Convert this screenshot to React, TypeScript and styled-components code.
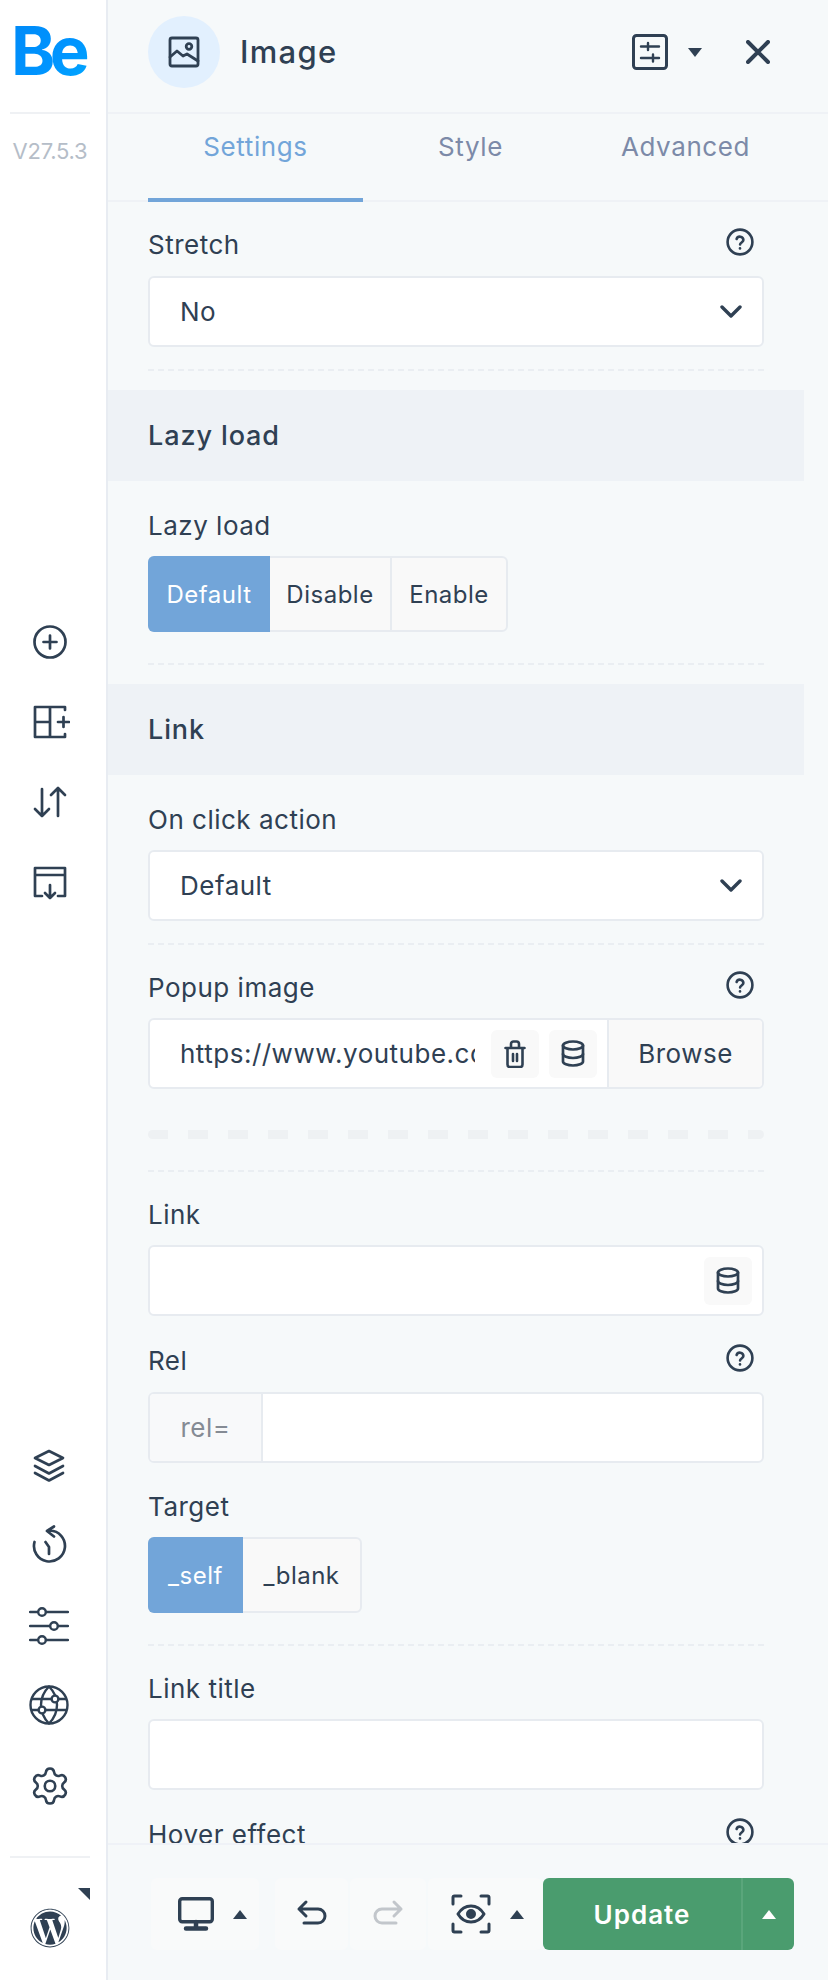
import React from "react";
import styled, { createGlobalStyle } from "styled-components";
import { FaWordpress } from "react-icons/fa";
import { Settings as GearIcon } from "lucide-react";

const INK = "#2f4053";
const FONT = `Inter, "Noto Sans", "Liberation Sans", sans-serif`;

const Global = createGlobalStyle`
  html, body { margin: 0; padding: 0; height: 1980px; overflow: hidden; background: #f6f9fa; }
  body { font-family: ${FONT}; color: ${INK}; }
  * { box-sizing: border-box; }
`;

const Page = styled.div`display: flex; width: 828px; height: 1980px; overflow: hidden;`;

const Sidebar = styled.aside`
  width: 108px; flex: none; background: #fff; border-right: 2px solid #e8ecf2; padding-right: 6px;
  display: flex; flex-direction: column; align-items: center; height: 100%;
`;
const LogoBox = styled.div`
  width: 80px; height: 114px; border-bottom: 2px solid #eff1f4;
  display: flex; justify-content: flex-start; padding: 15px 0 0 1px;
`;
const Logo = styled.span`
  font: 700 67px/72px Inter, sans-serif; letter-spacing: -5.500px; height: 72px; padding-right: 7px;
  background: linear-gradient(135deg, #0089f7 0%, #0095ff 60%, #00aaff 100%);
  -webkit-background-clip: text; background-clip: text; color: transparent;
`;
const Version = styled.div`
  margin-top: 22px; font-size: 22px; line-height: 30px; color: #b5bdc8; letter-spacing: -0.2px; white-space: nowrap;
`;
const ToolGroup = styled.div<{ $top: string }>`
  display: flex; flex-direction: column; gap: 40px; margin-top: ${p => p.$top};
`;
const BottomBox = styled.div`
  position: relative; margin-top: 49px; width: 80px; height: 124px; border-top: 2px solid #eff1f4;
  display: flex; justify-content: center; padding-top: 50px;
`;
const Corner = styled.span`
  position: absolute; right: 0; top: 30px; width: 0; height: 0;
  border-top: 12px solid ${INK}; border-left: 12px solid transparent;
`;

const Svg = styled.svg<{ $w?: number; $h?: number; $sw?: number; $c?: string }>`
  display: block; flex: none; width: ${p => p.$w ?? 40}px; height: ${p => p.$h ?? p.$w ?? 40}px;
  fill: none; stroke: ${p => p.$c ?? INK}; stroke-width: ${p => p.$sw ?? 2.7};
  stroke-linecap: round; stroke-linejoin: round;
`;

const Main = styled.main`flex: 1; min-width: 0; display: flex; flex-direction: column; height: 100%; background: #f6f9fa;`;

const Header = styled.header`
  height: 112px; flex: none; display: flex; align-items: center; padding: 0 58px 8px 40px;
`;
const IconCircle = styled.div`
  width: 72px; height: 72px; border-radius: 50%; background: #e2f0fe;
  display: flex; align-items: center; justify-content: center;
`;
const Title = styled.h1`
  margin: 0 0 0 20px; font-size: 31px; line-height: 36px; font-weight: 500; color: ${INK}; flex: 1; letter-spacing: 1.300px;
`;
const Caret = styled.span<{ $up?: boolean; $c?: string }>`
  display: block; flex: none; width: 0; height: 0;
  border-left: 7px solid transparent; border-right: 7px solid transparent;
  ${p => p.$up
    ? `border-bottom: 9px solid ${p.$c ?? INK};`
    : `border-top: 9px solid ${p.$c ?? INK};`}
`;
const HeaderActions = styled.div`display: flex; align-items: center;`;
const CaretGap = styled.span`width: 20px;`;
const CloseGap = styled.span`width: 44px;`;

const Tabs = styled.nav`
  height: 90px; flex: none; display: flex; padding-left: 40px;
  border-top: 2px solid #eff2f6; border-bottom: 2px solid #eff2f6;
`;
const Tab = styled.div<{ $active?: boolean }>`
  width: 215px; height: 88px; margin-bottom: -2px; padding-top: 16px; text-align: center;
  font-size: 26px; line-height: 34px; letter-spacing: 0.6px;
  color: ${p => (p.$active ? "#72a5d9" : "#7c8aa8")};
  border-bottom: 4px solid ${p => (p.$active ? "#72a5d9" : "transparent")};
`;

const Scroll = styled.div`flex: 1; min-height: 0; overflow: hidden; padding-top: 28px;`;
const Block = styled.div`padding: 0 64px 0 40px;`;
const Field = styled.div<{ $top?: number }>`margin-top: ${p => p.$top ?? 30}px;`;
const LabelRow = styled.div<{ $mb?: number }>`
  display: flex; align-items: center; justify-content: space-between; height: 30px; margin-bottom: ${p => p.$mb ?? 15}px;
`;
const Label = styled.label`font-size: 26px; line-height: 30px; letter-spacing: 0.5px; color: ${INK};`;
const HelpWrap = styled.span`margin-right: 10px; margin-top: -6px;`;

const Box = styled.div<{ $pad?: boolean; $h?: number }>`
  height: ${p => p.$h ?? 71}px; background: #fff; border: 2px solid #e7ebf0; border-radius: 6px;
  display: flex; align-items: center; overflow: hidden;
  font-size: 26px; letter-spacing: 0.5px; padding-left: ${p => (p.$pad ? 30 : 0)}px;
`;
const Grow = styled.span`flex: 1; min-width: 0; white-space: nowrap; overflow: hidden;`;
const ChevronSlot = styled.span`margin-right: 20px;`;
const UrlText = styled.span`width: 295px; flex: none; white-space: nowrap; overflow: hidden;`;
const MiniBtn = styled.span<{ $ml?: number }>`
  flex: none; width: 48px; height: 48px; border-radius: 6px; background: #f9f9f9;
  display: flex; align-items: center; justify-content: center; margin-left: ${p => p.$ml ?? 10}px;
`;
const LinkDb = styled(MiniBtn)`margin: 0 10px 0 auto;`;
const Browse = styled.span`
  margin-left: 10px; height: 100%; flex: 1; background: #f9f9f9; border-left: 2px solid #e7ebf0;
  display: flex; align-items: center; justify-content: center;
`;
const Prefix = styled.span`
  flex: none; width: 113px; height: 100%; background: #f8f9fa; border-right: 2px solid #e7ebf0;
  display: flex; align-items: center; justify-content: center; color: #858b94;
`;

const Seg = styled.div`
  display: inline-flex; height: 76px; border: 2px solid #e7ebf0; border-radius: 6px; background: #f9f9f9; vertical-align: top;
`;
const SegItem = styled.span<{ $w: number; $on?: boolean; $sep?: boolean }>`
  width: ${p => p.$w}px; display: flex; align-items: center; justify-content: center; font-size: 24px; letter-spacing: 0.5px;
  ${p => p.$on ? `margin: -2px 0 -2px -2px; background: #72a5d9; color: #fff; border-radius: 6px 0 0 6px;` : ""}
  ${p => p.$sep ? `border-left: 2px solid #e7ebf0;` : ""}
`;
const SegWrap = styled.div`height: 76px;`;

const Divider = styled.div<{ $top?: number }>`
  margin-top: ${p => p.$top ?? 22}px; margin-bottom: -2px; height: 0; border-top: 2px dashed #eaeef2;
`;
const ThickDash = styled.div`
  margin-top: 41px; height: 9px; border-radius: 5px;
  background: repeating-linear-gradient(90deg, #eef1f3 0 20px, transparent 20px 40px);
`;
const Section = styled.h2`
  margin: 21px 24px 0 0; height: 91px; background: #eef2f6; padding-left: 40px;
  display: flex; align-items: center; font-size: 27px; font-weight: 500; color: ${INK}; letter-spacing: 0.9px;
`;

const Footer = styled.footer`
  position: relative; height: 137px; flex: none; border-top: 2px solid #eff2f7; background: #f6f9fa;
  display: flex; align-items: flex-start; padding: 33px 0 0 43px;
`;
const FootBtn = styled.div<{ $w: number; $ml?: number; $lead?: number }>`
  width: ${p => p.$w}px; margin-left: ${p => p.$ml ?? 2}px; height: 72px; background: #f9fafa; border-radius: 6px;
  display: flex; align-items: center; gap: 19px; flex: none;
  ${p => (p.$lead ? `padding-left: ${p.$lead}px;` : "justify-content: center;")}
`;
const Update = styled.div`
  margin-left: 1px; width: 251px; height: 72px; background: #4a9c6e; border-radius: 6px; color: #fff;
  display: flex; flex: none; font-size: 26px; font-weight: 600; letter-spacing: 1px;
`;
const UpdateText = styled.span`width: 198px; display: flex; align-items: center; justify-content: center;`;
const UpdateCaret = styled.span`
  flex: 1; border-left: 2px solid #5aa67b; display: flex; align-items: center; justify-content: center;
`;

const Help = () => (
  <Svg viewBox="0 0 28 28" $w={28} $sw={2.6}>
    <circle cx="14" cy="14" r="12.4" />
    <path d="M10.6 11a3.5 3.5 0 0 1 6.8 1c0 2.2-3.3 2.6-3.3 4.4" />
    <path d="M14 20.3v.1" />
  </Svg>
);
const Chevron = () => (
  <Svg viewBox="0 0 22 13" $w={22} $h={13} $sw={3.4}>
    <path d="M2 2l9 9 9-9" />
  </Svg>
);
const Db = () => (
  <Svg viewBox="0 0 24 27" $w={24} $h={27} $sw={2.7}>
    <ellipse cx="12" cy="5.500" rx="10" ry="4" />
    <path d="M2 5.500v16c0 2.200 4.500 4 10 4s10-1.800 10-4v-16" />
    <path d="M2 14c0 2.200 4.500 4 10 4s10-1.800 10-4" />
  </Svg>
);
const Trash = () => (
  <Svg viewBox="0 0 22 28" $w={22} $h={28} $sw={2.6}>
    <path d="M1.500 8h19M3.500 8v16.500a2.500 2.500 0 0 0 2.500 2.500h10a2.500 2.500 0 0 0 2.500-2.500V8M7 8V4a2.500 2.500 0 0 1 2.500-2.500h3A2.500 2.500 0 0 1 15 4v4M9 14v7M13 14v7" />
  </Svg>
);

const SelectBox = ({ text }: { text: string }) => (
  <Box $pad>
    <Grow>{text}</Grow>
    <ChevronSlot><Chevron /></ChevronSlot>
  </Box>
);

export default function App() {
  return (
    <Page>
      <Global />
      <Sidebar>
        <LogoBox><Logo>Be</Logo></LogoBox>
        <Version>V27.5.3</Version>
        <ToolGroup $top="456px">
          <Svg viewBox="0 0 40 40"><circle cx="20" cy="20" r="15.5" /><path d="M20 13.5v13M13.5 20h13" /></Svg>
          <Svg viewBox="0 0 40 40"><path d="M35 8V5H5v30h30v-3M20 5v30M5 20h15M28 20h11M33.5 15v10" /></Svg>
          <Svg viewBox="0 0 40 40"><path d="M12 7v27M5 27l7 7 7-7M28 34V6M21 13l7-7 7 7" /></Svg>
          <Svg viewBox="0 0 40 40"><path d="M12 34H5V6h30v28h-7M5 13h30M20 23v13M15 31l5 5 5-5" /></Svg>
        </ToolGroup>
        <ToolGroup $top="auto">
          <Svg viewBox="0 0 40 40"><path d="M20 6l14 7-14 7-14-7zM6 21l14 7.500 14-7.500M6 28l14 7.500 14-7.500" /></Svg>
          <Svg viewBox="0 0 40 40"><path d="M21 5.500A15.500 15.500 0 1 1 5.500 17M25 1.500l-7 4.500 7 5.500M16.500 17l3.500 5v7" /></Svg>
          <Svg viewBox="0 0 40 40" $sw={2.4}><path d="M1 7h7M17 7h22M1 21h20M29 21h10M1 35h7M17 35h22" /><circle cx="13" cy="7" r="3.800" /><circle cx="25" cy="21" r="3.800" /><circle cx="13" cy="35" r="3.800" /></Svg>
          <Svg viewBox="0 0 40 40" $sw={2.4}><circle cx="20" cy="20" r="18.500" /><path d="M20 1.500c-5 5-8 11-8 18.500s3 13.500 8 18.500c5-5 8-11 8-18.500S25 6.500 20 1.500zM3 14h20M29 14h8M3 25h7M16 25h21" /><circle cx="26" cy="14" r="3.400" fill="#fff" /><circle cx="13" cy="25" r="3.400" fill="#fff" /></Svg>
          <GearIcon size={42} color={INK} strokeWidth={1.5} />
        </ToolGroup>
        <BottomBox>
          <Corner />
          <FaWordpress size={40} color={INK} />
        </BottomBox>
      </Sidebar>

      <Main>
        <Header>
          <IconCircle>
            <Svg viewBox="0 0 32 32" $w={32} $sw={2.8}>
              <rect x="2" y="2" width="28" height="28" rx="2" />
              <circle cx="21" cy="10.500" r="2.800" />
              <path d="M2 21l7-6 6 5 4-2 11 7" />
            </Svg>
          </IconCircle>
          <Title>Image</Title>
          <HeaderActions>
            <Svg viewBox="0 0 36 36" $w={36} $sw={3}>
              <rect x="1.500" y="1.500" width="33" height="33" rx="3" />
              <path d="M9 12.500h18M9 24h18M16 9v7M21 20.500v7" strokeWidth="2.400" />
            </Svg>
            <CaretGap />
            <Caret />
            <CloseGap />
            <Svg viewBox="0 0 24 24" $w={24} $sw={4}>
              <path d="M2 2l20 20M22 2 2 22" />
            </Svg>
          </HeaderActions>
        </Header>
        <Tabs>
          <Tab $active>Settings</Tab>
          <Tab>Style</Tab>
          <Tab>Advanced</Tab>
        </Tabs>
        <Scroll>
          <Block>
            <Field $top={0}>
              <LabelRow $mb={16}><Label>Stretch</Label><HelpWrap><Help /></HelpWrap></LabelRow>
              <SelectBox text="No" />
            </Field>
            <Divider />
          </Block>
          <Section>Lazy load</Section>
          <Block>
            <Field>
              <LabelRow><Label>Lazy load</Label></LabelRow>
              <SegWrap>
                <Seg>
                  <SegItem $w={122} $on>Default</SegItem>
                  <SegItem $w={120}>Disable</SegItem>
                  <SegItem $w={116} $sep>Enable</SegItem>
                </Seg>
              </SegWrap>
            </Field>
            <Divider $top={31} />
          </Block>
          <Section>Link</Section>
          <Block>
            <Field>
              <LabelRow><Label>On click action</Label></LabelRow>
              <SelectBox text="Default" />
            </Field>
            <Divider />
            <Field>
              <LabelRow><Label>Popup image</Label><HelpWrap><Help /></HelpWrap></LabelRow>
              <Box $pad>
                <UrlText>https://www.youtube.com/watch</UrlText>
                <MiniBtn $ml={16}><Trash /></MiniBtn>
                <MiniBtn><Db /></MiniBtn>
                <Browse>Browse</Browse>
              </Box>
            </Field>
            <ThickDash />
            <Divider $top={31} />
            <Field>
              <LabelRow><Label>Link</Label></LabelRow>
              <Box><LinkDb><Db /></LinkDb></Box>
            </Field>
            <Field>
              <LabelRow $mb={16}><Label>Rel</Label><HelpWrap><Help /></HelpWrap></LabelRow>
              <Box><Prefix>rel=</Prefix></Box>
            </Field>
            <Field $top={29}>
              <LabelRow><Label>Target</Label></LabelRow>
              <SegWrap>
                <Seg>
                  <SegItem $w={95} $on>_self</SegItem>
                  <SegItem $w={117}>_blank</SegItem>
                </Seg>
              </SegWrap>
            </Field>
            <Divider $top={31} />
            <Field>
              <LabelRow><Label>Link title</Label></LabelRow>
              <Box />
            </Field>
            <Field>
              <LabelRow><Label>Hover effect</Label><HelpWrap><Help /></HelpWrap></LabelRow>
            </Field>
          </Block>
        </Scroll>
        <Footer>
          <FootBtn $w={108} $ml={0} $lead={27}>
            <Svg viewBox="0 0 36 34" $w={36} $h={34} $sw={3.4}>
              <rect x="1.700" y="1.700" width="32.600" height="23" rx="2.500" />
              <path d="M18 25v6M8 31.500h20" strokeWidth="4.500" />
            </Svg>
            <Caret $up />
          </FootBtn>
          <FootBtn $w={73} $ml={16}>
            <Svg viewBox="0 0 32 32" $w={32} $sw={3}>
              <path d="M10 4 3 11l7 7M3 11h19a7 7 0 0 1 0 14H8" />
            </Svg>
          </FootBtn>
          <FootBtn $w={76}>
            <Svg viewBox="0 0 32 32" $w={32} $sw={3} $c="#c2c6cb">
              <path d="M22 4l7 7-7 7M29 11H10a7 7 0 0 0 0 14h14" />
            </Svg>
          </FootBtn>
          <FootBtn $w={114} $lead={23}>
            <Svg viewBox="0 0 40 40" $w={40} $sw={3}>
              <path d="M2 10V3.500A1.500 1.500 0 0 1 3.500 2H10M30 2h6.500A1.500 1.500 0 0 1 38 3.500V10M38 30v6.500a1.500 1.500 0 0 1-1.500 1.500H30M10 38H3.500A1.500 1.500 0 0 1 2 36.500V30" />
              <path d="M7 20c3-5 8-8 13-8s10 3 13 8c-3 5-8 8-13 8s-10-3-13-8z" />
              <circle cx="20" cy="20" r="3.500" fill={INK} />
            </Svg>
            <Caret $up />
          </FootBtn>
          <Update>
            <UpdateText>Update</UpdateText>
            <UpdateCaret><Caret $up $c="#fff" /></UpdateCaret>
          </Update>
        </Footer>
      </Main>
    </Page>
  );
}
